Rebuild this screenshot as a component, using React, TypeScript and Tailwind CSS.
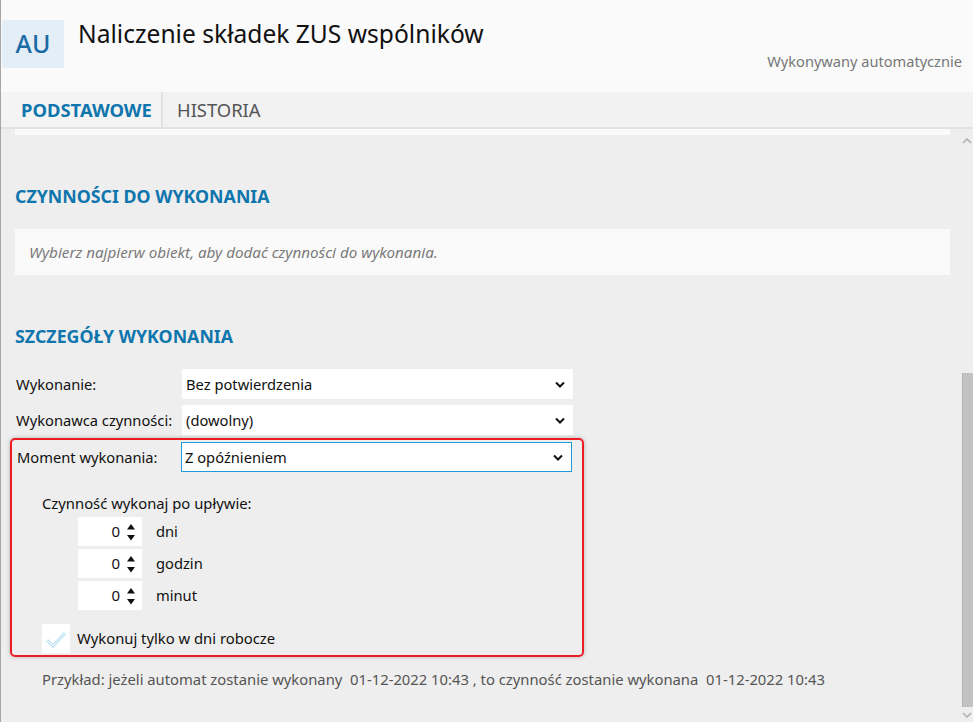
import React from 'react';

const Chevron: React.FC = () => (
    <svg width="10" height="7" viewBox="0 0 10 7" className="shrink-0">
        <polyline points="1,1.5 5,5.5 9,1.5" fill="none" stroke="#111" strokeWidth="2" />
    </svg>
);

const Select: React.FC<{ value: string; active?: boolean }> = ({ value, active }) => (
    <div
        className={`w-[391px] flex items-center justify-between bg-white pr-[8px] text-[14.7px] text-[#111] ${active ? 'h-[30px] pl-[3px] border border-[#1e9bd7]' : 'h-[30px] pl-[4px]'}`}
    >
        <span>{value}</span>
        <Chevron />
    </div>
);

const Spinner: React.FC<{ label: string }> = ({ label }) => (
    <div className="flex items-center">
        <div className="w-[64px] h-[29px] bg-white flex items-center justify-end pr-[7px] gap-[7px] text-[15px] text-[#111]">
            <span>0</span>
            <svg width="8" height="20" viewBox="0 0 8 20">
                <polygon points="4,2 8,7.5 0,7.5" fill="#111" />
                <polygon points="0,13 8,13 4,18.5" fill="#111" />
            </svg>
        </div>
        <span className="ml-[14px] text-[14.7px] text-[#111]">{label}</span>
    </div>
);

export default function App() {
    const tabs = [
        { name: 'PODSTAWOWE', active: true },
        { name: 'HISTORIA', active: false },
    ];

    return (
        <div
            className="w-[973px] h-[722px] overflow-hidden flex flex-col border-l border-[#a6a6a6] bg-[#eeeeee]"
            style={{ fontFamily: '"Noto Sans", "Open Sans", sans-serif' }}
        >
            {/* Header */}
            <header className="h-[92px] bg-[#fafafa] flex justify-between shrink-0">
                <div className="flex items-start pt-[20px]">
                    <div className="w-[62px] h-[48px] ml-[1px] bg-[#e3eef7] flex items-center justify-center text-[25px] font-medium text-[#1c6aa3]">
                        AU
                    </div>
                    <h1 className="ml-[14px] -mt-[3px] text-[24.6px] leading-[34px] text-[#111]">
                        Naliczenie składek ZUS wspólników
                    </h1>
                </div>
                <div className="self-end pb-[21px] pr-[11px] text-[14.6px] leading-[20px] text-[#777]">
                    Wykonywany automatycznie
                </div>
            </header>

            {/* Tabs */}
            <nav className="h-[37px] bg-[#f2f2f2] border-b-2 border-[#e2e2e2] flex shrink-0">
                {tabs.map((tab) => (
                    <div
                        key={tab.name}
                        className={`h-full flex items-center text-[18.4px] ${tab.active ? 'w-[162px] pl-[20px] font-bold text-[#0f76ad] border-r-2 border-[#e2e2e2] bg-[#f4f4f4]' : 'pl-[14px] text-[#555]'}`}
                    >
                        {tab.name}
                    </div>
                ))}
            </nav>

            <div className="flex flex-1 min-h-0">
                {/* Content */}
                <main className="flex-1 pl-[14px] pr-[11px]">
                    <div className="h-[6px] bg-[#fafafa]" />

                    <h2 className="mt-[49px] text-[17.8px] leading-[24px] font-bold text-[#0f76ad]">
                        CZYNNOŚCI DO WYKONANIA
                    </h2>
                    <div className="mt-[21px] h-[46px] bg-[#fafafa] flex items-center pl-[14px] text-[15.2px] italic text-[#7a7a7a]">
                        Wybierz najpierw obiekt, aby dodać czynności do wykonania.
                    </div>

                    <h2 className="mt-[49px] text-[17.8px] leading-[24px] font-bold text-[#0f76ad]">
                        SZCZEGÓŁY WYKONANIA
                    </h2>

                    <div className="mt-[21px] flex flex-col gap-[6px]">
                        <div className="flex items-center">
                            <span className="w-[167px] pl-[1px] text-[14.7px] text-[#111]">Wykonanie:</span>
                            <Select value="Bez potwierdzenia" />
                        </div>
                        <div className="flex items-center">
                            <span className="w-[167px] pl-[1px] text-[14.7px] text-[#111]">Wykonawca czynności:</span>
                            <Select value="(dowolny)" />
                        </div>
                    </div>

                    {/* Highlighted block */}
                    <div className="-ml-[5px] mt-[3px] w-[574px] border-2 border-[#ec1c24] rounded-[5px] pl-[4px] pt-[2px] pb-[2px] shadow-[0_0_4px_rgba(0,0,0,0.25)]">
                        <div className="flex items-center">
                            <span className="w-[165px] pl-[1px] text-[14.7px] text-[#111]">Moment wykonania:</span>
                            <Select value="Z opóźnieniem" active />
                        </div>
                        <div className="pl-[26px]">
                            <div className="mt-[21px] text-[14.8px] leading-[20px] text-[#111]">Czynność wykonaj po upływie:</div>
                            <div className="mt-[4px] pl-[36px] flex flex-col gap-[3px]">
                                <Spinner label="dni" />
                                <Spinner label="godzin" />
                                <Spinner label="minut" />
                            </div>
                            <div className="mt-[14px] flex items-center">
                                <div className="w-[28px] h-[29px] bg-white flex items-center justify-center">
                                    <svg width="22" height="18" viewBox="0 0 22 18">
                                        <path d="M2 10 L8 16 L20 3" fill="none" stroke="#b7e0f2" strokeWidth="3" />
                                        <path d="M2 10 L8 16 L20 3" fill="none" stroke="#ffffff" strokeWidth="1" />
                                    </svg>
                                </div>
                                <span className="ml-[7px] text-[14.8px] text-[#111]">Wykonuj tylko w dni robocze</span>
                            </div>
                        </div>
                    </div>

                    <div className="mt-[11px] pl-[27px] text-[14.8px] text-[#555]">
                        Przykład: jeżeli automat zostanie wykonany&nbsp; 01-12-2022 10:43 , to czynność zostanie wykonana&nbsp; 01-12-2022 10:43
                    </div>
                </main>

                {/* Scrollbar */}
                <aside className="w-[12px] flex flex-col items-center">
                    <svg width="10" height="6" viewBox="0 0 10 6" className="mt-[9px]">
                        <polyline points="1,5 5,1 9,5" fill="none" stroke="#b0b0b0" strokeWidth="1.5" />
                    </svg>
                    <div className="mt-[229px] w-[11px] ml-[1px] h-[334px] bg-[#c2c2c2] border-l border-[#b0b0b0]" />
                    <svg width="10" height="6" viewBox="0 0 10 6" className="mt-[5px]">
                        <polyline points="1,1 5,5 9,1" fill="none" stroke="#b0b0b0" strokeWidth="1.5" />
                    </svg>
                </aside>
            </div>
        </div>
    );
}
